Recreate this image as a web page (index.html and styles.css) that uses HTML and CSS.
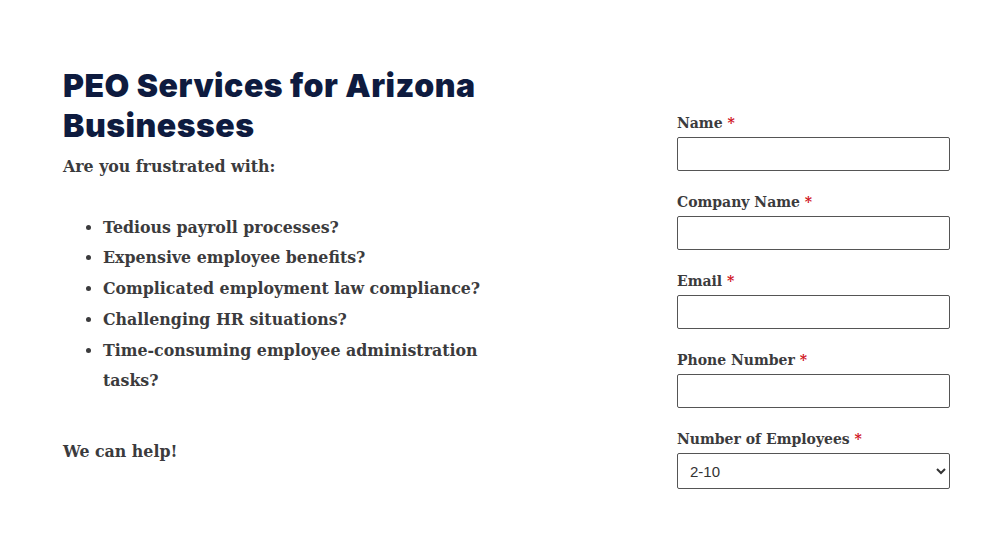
FILE: index.html
```html
<!DOCTYPE html>
<html>
<head>
<meta charset="utf-8">
<link rel="stylesheet" href="styles.css">
</head>
<body>
<div class="page">
  <div class="intro">
    <h1 class="title">PEO Services for Arizona Businesses</h1>
    <p class="lead">Are you frustrated with:</p>
    <ul class="pains">
      <li>Tedious payroll processes?</li>
      <li>Expensive employee benefits?</li>
      <li>Complicated employment law compliance?</li>
      <li>Challenging HR situations?</li>
      <li>Time-consuming employee administration tasks?</li>
    </ul>
    <p class="help">We can help!</p>
  </div>
  <form class="form">
    <div class="field">
      <label class="label">Name <span class="req">*</span></label>
      <input class="input" type="text">
    </div>
    <div class="field">
      <label class="label">Company Name <span class="req">*</span></label>
      <input class="input" type="text">
    </div>
    <div class="field">
      <label class="label">Email <span class="req">*</span></label>
      <input class="input" type="text">
    </div>
    <div class="field">
      <label class="label">Phone Number <span class="req">*</span></label>
      <input class="input" type="text">
    </div>
    <div class="field">
      <label class="label">Number of Employees <span class="req">*</span></label>
      <select class="select"><option>2-10</option></select>
    </div>
  </form>
</div>
</body>
</html>
```
FILE: styles.css
```css
html, body { margin: 0; padding: 0; background: #fff; }
body { font-family: "DejaVu Serif", serif; color: #3b3b3d; }
.page {
  display: flex;
  justify-content: space-between;
  padding: 66px 58px 0 63px;
  width: 1008px;
  box-sizing: border-box;
}
.intro { width: 440px; }
.title {
  font-family: Inter, "Open Sans", sans-serif;
  font-weight: 900;
  font-size: 32px;
  line-height: 40px;
  color: #0e1b3f;
  margin: 0;
  letter-spacing: 0.5px;
}
.lead, .pains, .help {
  font-weight: bold;
  font-size: 15.8px;
  line-height: 30.7px;
}
.lead { margin: 6px 0 0 0; }
.pains { margin: 30px 0 0 0; padding-left: 40px; }
.help { margin: 40px 0 0 0; }
.form {
  width: 273px;
  padding-top: 46px;
  display: flex;
  flex-direction: column;
  gap: 8px;
}
.field { display: flex; flex-direction: column; }
.label {
  font-weight: bold;
  font-size: 14px;
  line-height: 22px;
  margin-bottom: 3px;
  color: #3b3b3d;
}
.req { color: #d0121c; }
.input, .select {
  box-sizing: border-box;
  width: 273px;
  height: 34px;
  border: 1px solid #555;
  border-radius: 2px;
  background: #fff;
  margin: 0;
  font-family: "Liberation Sans", sans-serif;
}
.input { margin-bottom: 12px; }
.select {
  height: 36px;
  font-size: 15px;
  padding: 0 8px;
  color: #333;
}
```
